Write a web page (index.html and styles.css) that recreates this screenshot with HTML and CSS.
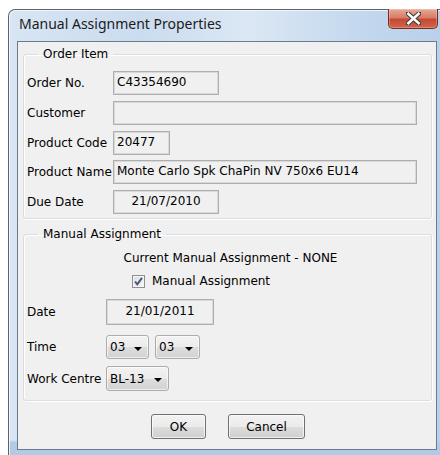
FILE: index.html
```html
<!DOCTYPE html>
<html lang="en">
<head>
<meta charset="utf-8">
<title>Manual Assignment Properties</title>
<link rel="stylesheet" href="styles.css">
</head>
<body>
<div class="window">
  <div class="titlebar">
    <span class="title">Manual Assignment Properties</span>
    <button class="close" type="button" aria-label="Close">
      <svg width="15" height="13" viewBox="0 0 15 13">
        <path d="M2 1.5 L13 11.5 M13 1.5 L2 11.5" stroke="#3c3c3c" stroke-width="4.6" stroke-linecap="square"/>
        <path d="M2.4 1.9 L12.6 11.1 M12.6 1.9 L2.4 11.1" stroke="#ffffff" stroke-width="2.6" stroke-linecap="square"/>
      </svg>
    </button>
  </div>

  <div class="client">
    <fieldset class="group order">
      <legend>Order Item</legend>
      <div class="row">
        <span class="label">Order No.</span>
        <span class="field w-date">C43354690</span>
      </div>
      <div class="row">
        <span class="label">Customer</span>
        <span class="field w-wide"></span>
      </div>
      <div class="row">
        <span class="label">Product Code</span>
        <span class="field w-code">20477</span>
      </div>
      <div class="row">
        <span class="label">Product Name</span>
        <span class="field w-wide">Monte Carlo Spk ChaPin NV 750x6 EU14</span>
      </div>
      <div class="row">
        <span class="label">Due Date</span>
        <span class="field w-date centered">21/07/2010</span>
      </div>
    </fieldset>

    <fieldset class="group manual">
      <legend>Manual Assignment</legend>
      <div class="status">Current Manual Assignment - NONE</div>
      <label class="check">
        <span class="box">
          <svg width="11" height="11" viewBox="0 0 11 11">
            <path d="M2 5.5 L4.3 8.4 L9 1.8" fill="none" stroke="#45598a" stroke-width="2"/>
          </svg>
        </span>
        Manual Assignment
      </label>
      <div class="row r-date">
        <span class="label">Date</span>
        <span class="field w-date2 centered">21/01/2011</span>
      </div>
      <div class="row r-time">
        <span class="label">Time</span>
        <span class="combo w-hour">03<i class="arrow"></i></span>
        <span class="combo w-min">03<i class="arrow"></i></span>
      </div>
      <div class="row r-wc">
        <span class="label">Work Centre</span>
        <span class="combo w-wc">BL-13<i class="arrow"></i></span>
      </div>
    </fieldset>

    <div class="buttons">
      <button class="btn ok" type="button">OK</button>
      <button class="btn cancel" type="button">Cancel</button>
    </div>
  </div>
</div>
</body>
</html>
```

FILE: styles.css
```css
html, body {
  margin: 0;
  padding: 0;
  background: #ffffff;
  overflow: hidden;
}

body {
  width: 440px;
  height: 455px;
  font-family: "DejaVu Sans", sans-serif;
  font-size: 12px;
  color: #000;
}

/* Aero style window frame */
.window {
  margin: 9px 0 0 8px;
  width: 438px;
  box-sizing: border-box;
  padding: 0 8px 8px 8px;
  border: 1px solid #5a6470;
  border-bottom: none;
  border-radius: 7px 7px 0 0;
  background:
    linear-gradient(to bottom, rgba(255,255,255,0) 0%, rgba(255,255,255,0) 96%, #b3cae6 96.5%),
    linear-gradient(to right, #d8e5f3 0%, #cadcef 30%, #dbe7f4 55%, #c4d8ee 80%, #b9d0ea 100%);
  box-shadow: inset 1px 1px 0 rgba(255,255,255,0.7);
}

.titlebar {
  height: 31px;
  display: flex;
  align-items: flex-start;
  padding-left: 2px;
}

.title {
  font-family: "Noto Sans", sans-serif;
  font-size: 14px;
  line-height: 20px;
  margin-top: 4px;
  color: #1b1b1b;
}

.close {
  margin-left: auto;
  margin-right: -1px;
  margin-top: -1px;
  width: 50px;
  height: 20px;
  padding: 0;
  border: 1px solid #7a2a1e;
  border-top: none;
  border-radius: 0 0 5px 5px;
  background: linear-gradient(to bottom, #e9a898 0%, #d77c68 45%, #c44a33 55%, #d2644c 100%);
  display: flex;
  align-items: center;
  justify-content: center;
  box-shadow: inset 0 0 0 1px rgba(255,255,255,0.25);
}

.client {
  border: 1px solid #6b7b8c;
  background: #f0f0f0;
  padding: 5px 4px 8px 5px;
  height: 409px;
  box-sizing: border-box;
}

/* Etched group boxes */
.group {
  margin: 0;
  min-width: 0;
  border: 1px solid #d5dfe5;
  border-radius: 3px;
  box-shadow: inset 1px 1px 0 #ffffff, 1px 1px 0 #ffffff;
  padding: 0 3px;
}

.group legend {
  margin-left: 11px;
  padding: 0 5px;
  line-height: 14px;
}

.order {
  padding-top: 10px;
  padding-bottom: 4px;
  display: flex;
  flex-direction: column;
  gap: 5.75px;
}

.row {
  display: flex;
  align-items: center;
  height: 24px;
}

.order .label { width: 86px; }
.manual .label { width: 79px; }

.field {
  box-sizing: border-box;
  height: 24px;
  line-height: 20px;
  padding: 0 3px;
  border: 1px solid #aeaeae;
  box-shadow: inset 0 0 0 1px #d9d9d9;
  background: #f0f0f0;
  white-space: nowrap;
  overflow: hidden;
}

.centered { text-align: center; }

.w-date { width: 106px; }
.w-wide { width: 304px; }
.w-code { width: 57px; }
.w-date2 { width: 108px; height: 26px; line-height: 22px; }

.manual {
  margin-top: 8px;
  padding-top: 9px;
  padding-bottom: 9px;
}

.status {
  text-align: center;
  line-height: 16px;
  padding-left: 6px;
}

.check {
  display: flex;
  align-items: center;
  gap: 7px;
  margin: 7px 0 0 105px;
  line-height: 16px;
}

.box {
  box-sizing: border-box;
  width: 13px;
  height: 13px;
  border: 1px solid #8f8f8f;
  background: linear-gradient(135deg, #dcdcdc, #f8f8f8);
  box-shadow: inset 0 0 0 1px #f4f4f4;
  display: flex;
  align-items: center;
  justify-content: center;
}

.r-date { margin-top: 10px; height: 26px; }
.r-time { margin-top: 10px; gap: 6px; }
.r-wc { margin-top: 7px; height: 25px; }

.r-time .label { margin-right: -6px; }

.combo {
  box-sizing: border-box;
  height: 24px;
  display: flex;
  align-items: center;
  padding: 0 0 0 3px;
  border: 1px solid #acacac;
  border-radius: 3px;
  background: linear-gradient(to bottom, #f3f3f3 0%, #ebebeb 50%, #dddddd 51%, #d3d3d3 100%);
  box-shadow: inset 0 0 0 1px rgba(255,255,255,0.6);
}

.r-wc .combo { height: 25px; }

.w-hour { width: 43px; }
.w-min { width: 45px; }
.w-wc { width: 63px; }

.arrow {
  margin-left: auto;
  margin-right: 6px;
  width: 0;
  height: 0;
  border-left: 4px solid transparent;
  border-right: 4px solid transparent;
  border-top: 4px solid #000;
  margin-top: 3px;
}

.buttons {
  display: flex;
  justify-content: center;
  gap: 22px;
  margin-top: 13px;
  padding-left: 1px;
}

.btn {
  box-sizing: border-box;
  height: 25px;
  font-family: "DejaVu Sans", sans-serif;
  font-size: 12px;
  color: #000;
  border: 1px solid #707070;
  border-radius: 3px;
  background: linear-gradient(to bottom, #f2f2f2 0%, #ebebeb 50%, #dddddd 51%, #cfcfcf 100%);
  box-shadow: inset 0 0 0 1px rgba(255,255,255,0.7);
  padding: 0;
}

.ok { width: 55px; }
.cancel { width: 77px; }
```
